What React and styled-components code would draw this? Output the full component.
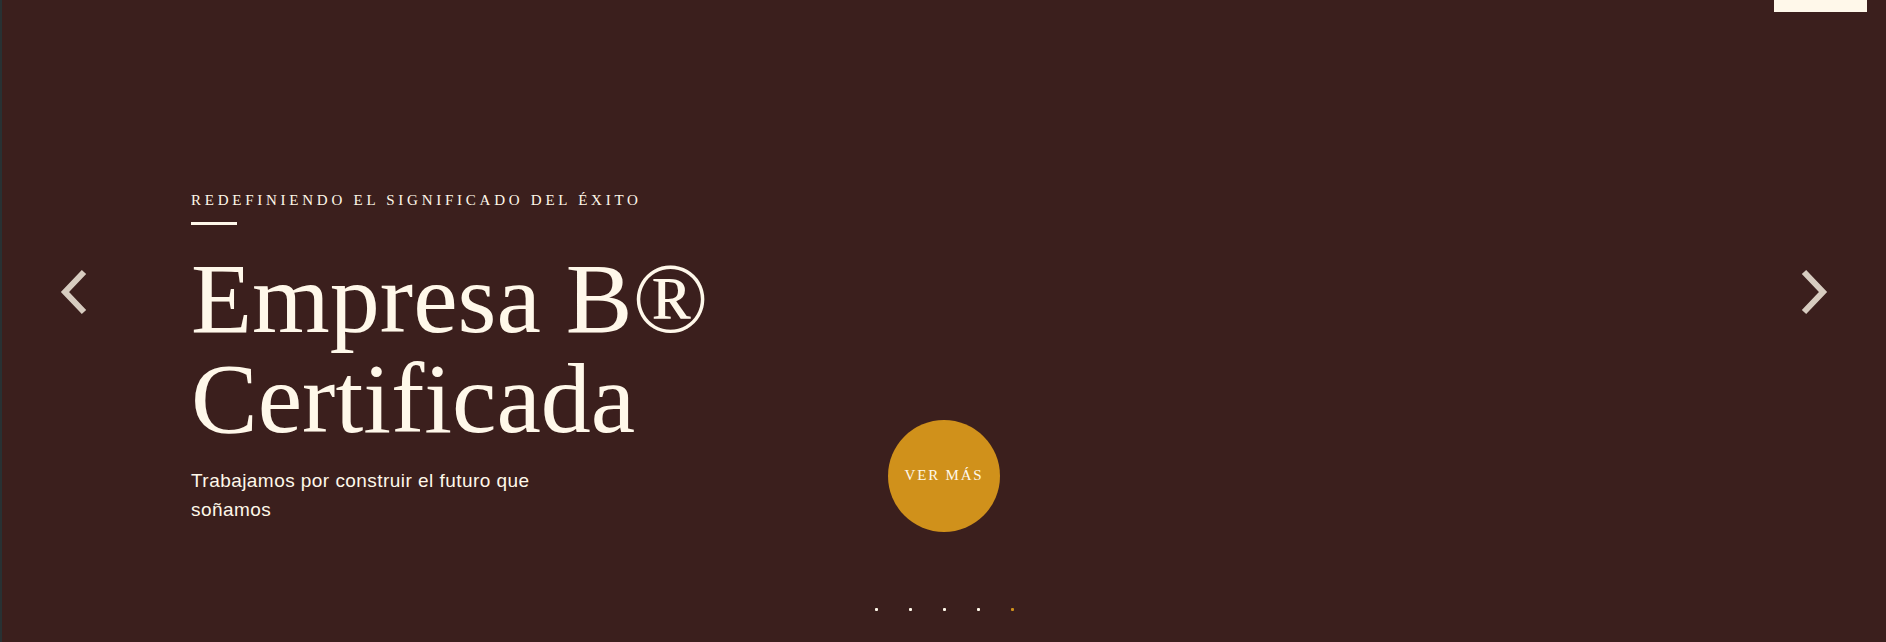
import React, { useState } from 'react';
import styled, { createGlobalStyle } from 'styled-components';

const GlobalStyle = createGlobalStyle`
  html, body {
    margin: 0;
    padding: 0;
    background: #3b1f1d;
  }
  * { box-sizing: border-box; }
`;

const slides = [
  { eyebrow: 'Redefiniendo el significado del éxito', title: ['Empresa B®', 'Certificada'], text: 'Trabajamos por construir el futuro que soñamos' },
  { eyebrow: '', title: [], text: '' },
  { eyebrow: '', title: [], text: '' },
  { eyebrow: '', title: [], text: '' },
  { eyebrow: '', title: [], text: '' },
];

export default function App() {
  const [active, setActive] = useState(4);
  const slide = slides[0];

  return (
    <>
      <GlobalStyle />
      <Hero>
        <Header>
          <HeaderTab />
        </Header>

        <Row>
          <TextCol>
            <Eyebrow>{slide.eyebrow}</Eyebrow>
            <Rule />
            <Title>
              {slide.title[0]}
              <br />
              {slide.title[1]}
            </Title>
            <Lead>{slide.text}</Lead>
          </TextCol>
          <CircleButton>Ver más</CircleButton>
        </Row>

        <Arrow $side="left" aria-label="Anterior">
          <svg width="30" height="46" viewBox="0 0 30 46">
            <polyline points="25,3 6,23 25,43" fill="none" stroke="currentColor" strokeWidth="6" />
          </svg>
        </Arrow>
        <Arrow $side="right" aria-label="Siguiente">
          <svg width="30" height="46" viewBox="0 0 30 46">
            <polyline points="5,3 24,23 5,43" fill="none" stroke="currentColor" strokeWidth="6" />
          </svg>
        </Arrow>

        <Dots>
          {slides.map((_, i) => (
            <Dot key={i} $active={i === active} onClick={() => setActive(i)} />
          ))}
        </Dots>
      </Hero>
    </>
  );
}

const Hero = styled.section`
  position: relative;
  height: 642px;
  width: 100%;
  background: #3b1f1d;
  border-left: 2px solid #283133;
  padding: 190px 0 0 189px;
  overflow: hidden;
`;

const Header = styled.header`
  position: absolute;
  top: 0;
  left: 0;
  right: 0;
  display: flex;
  justify-content: flex-end;
  padding-right: 19px;
`;

const HeaderTab = styled.div`
  width: 93px;
  height: 12px;
  background: #fff8ea;
`;

const Row = styled.div`
  display: flex;
  align-items: flex-end;
`;

const TextCol = styled.div`
  flex: 0 0 697px;
  display: flex;
  flex-direction: column;
  align-items: flex-start;
`;

const Eyebrow = styled.p`
  margin: 0;
  font-family: 'Liberation Serif', 'Times New Roman', serif;
  font-size: 15px;
  line-height: 20px;
  letter-spacing: 0.25em;
  text-transform: uppercase;
  color: #fff8ea;
`;

const Rule = styled.span`
  display: block;
  width: 46px;
  height: 3px;
  margin-top: 12px;
  background: #fff8ea;
`;

const Title = styled.h1`
  margin: 24px 0 0;
  font-family: 'Liberation Serif', 'Times New Roman', serif;
  font-weight: 400;
  font-size: 100px;
  line-height: 100px;
  color: #fff8ea;
`;

const Lead = styled.p`
  margin: 18px 0 0;
  max-width: 400px;
  font-family: 'Liberation Sans', Arial, sans-serif;
  font-size: 19px;
  line-height: 28.8px;
  letter-spacing: 0.45px;
  color: #fff8ea;
`;

const CircleButton = styled.button`
  flex: 0 0 auto;
  width: 112px;
  height: 112px;
  margin-bottom: -7px;
  border: none;
  border-radius: 50%;
  background: #d0911b;
  color: #fff8ea;
  font-family: 'Liberation Serif', 'Times New Roman', serif;
  font-size: 15px;
  letter-spacing: 1.8px;
  text-transform: uppercase;
  cursor: pointer;
`;

const Arrow = styled.button`
  position: absolute;
  top: 269px;
  ${(p) => (p.$side === 'left' ? 'left: 57px;' : 'right: 57px;')}
  width: 30px;
  height: 46px;
  padding: 0;
  border: none;
  background: transparent;
  color: rgba(255, 248, 234, 0.8);
  cursor: pointer;
  svg { display: block; }
`;

const Dots = styled.div`
  position: absolute;
  left: 0;
  right: 0;
  top: 608px;
  display: flex;
  justify-content: center;
  gap: 31px;
`;

const Dot = styled.span`
  width: 3px;
  height: 3px;
  border-radius: 1px;
  background: ${(p) => (p.$active ? '#d0911b' : '#fff8ea')};
  cursor: pointer;
`;
